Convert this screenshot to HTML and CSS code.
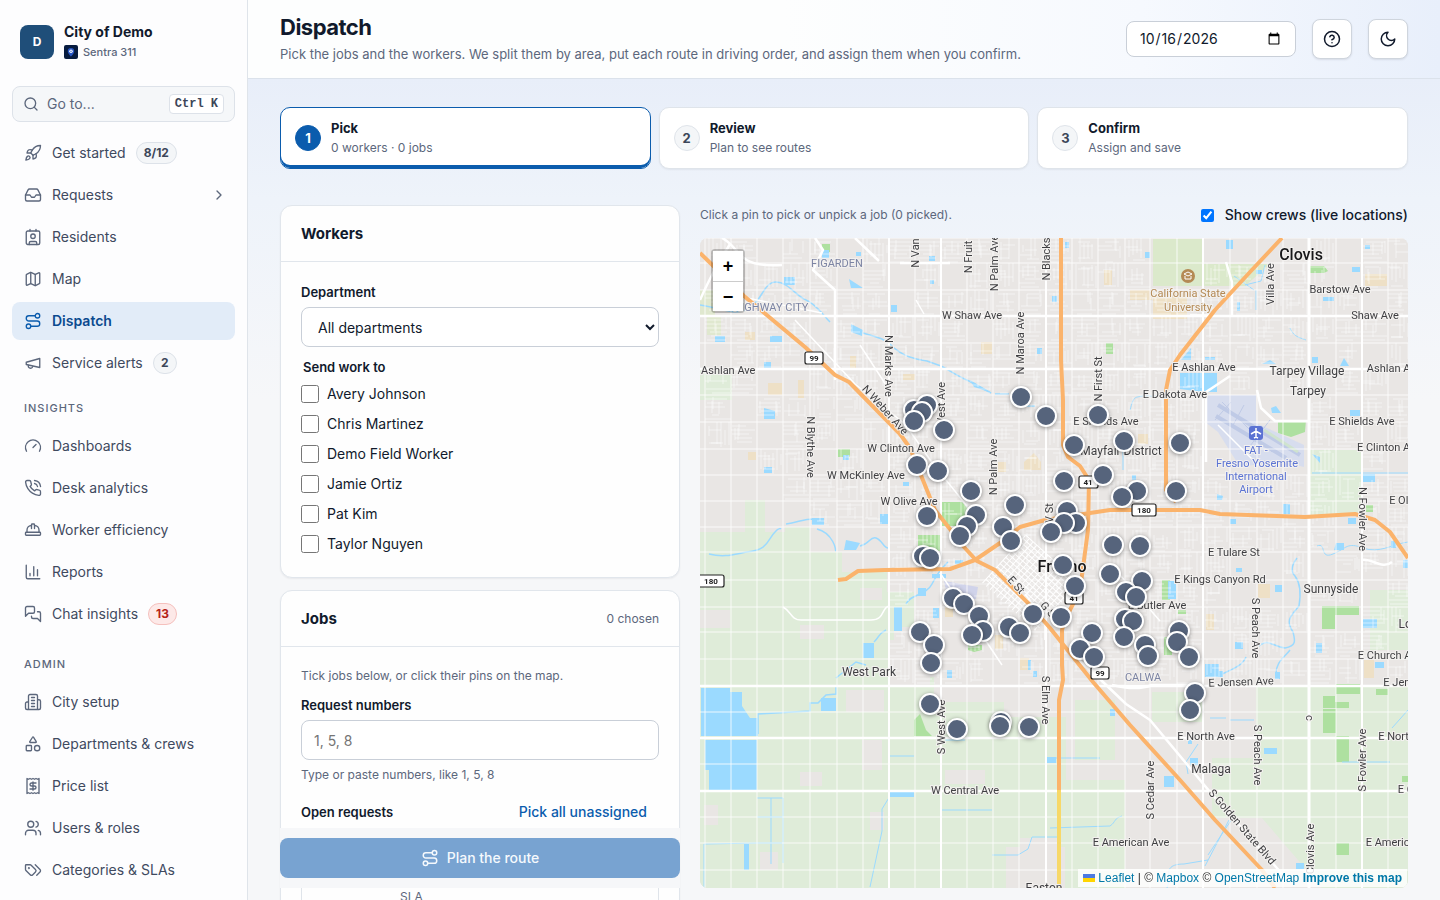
FILE: index.html
```html
<!DOCTYPE html>
<html lang="en">
<head>
<meta charset="utf-8">
<meta name="viewport" content="width=device-width, initial-scale=1">
<title>Dispatch</title>
<link rel="stylesheet" href="styles.css">
</head>
<body>
<div class="app">
  <aside class="sidebar">
    <div class="brand">
      <span class="brand-logo">D</span>
      <div>
        <div class="brand-name">City of Demo</div>
        <div class="brand-sub">
          <svg class="brand-mark" viewBox="0 0 14 14" aria-hidden="true"><rect width="14" height="14" rx="2" fill="#071b3f"/><path d="M7 3a3.2 3.2 0 0 0-3.200 3.200C3.800 8.600 7 11.500 7 11.500s3.200-2.900 3.200-5.300A3.200 3.200 0 0 0 7 3z" fill="#2756c5"/><circle cx="7" cy="6.300" r="1.700" fill="#fff"/><circle cx="7" cy="6.300" r=".7" fill="#2756c5"/></svg>
          Sentra 311
        </div>
      </div>
    </div>
    <button class="goto" type="button">
      <svg class="icon goto-icon" viewBox="0 0 24 24"><circle cx="11" cy="11" r="8"/><path d="m21 21-4.300-4.300"/></svg>
      <span>Go to...</span><kbd>Ctrl K</kbd>
    </button>
    <nav class="nav" aria-label="Main">
      <a class="nav-item" href="#"><svg class="icon" viewBox="0 0 24 24"><path d="M4.500 16.500c-1.500 1.260-2 5-2 5s3.740-.5 5-2c.71-.84.7-2.130-.09-2.910a2.180 2.180 0 0 0-2.910-.09z"/><path d="m12 15-3-3a22 22 0 0 1 2-3.950A12.880 12.880 0 0 1 22 2c0 2.720-.78 7.500-6 11a22.350 22.350 0 0 1-4 2z"/><path d="M9 12H4s.55-3.030 2-4c1.620-1.080 5 0 5 0"/><path d="M12 15v5s3.030-.55 4-2c1.080-1.620 0-5 0-5"/></svg>Get started<span class="badge">8/12</span></a>
      <a class="nav-item" href="#"><svg class="icon" viewBox="0 0 24 24"><path d="M22 12h-6l-2 3h-4l-2-3H2"/><path d="M5.450 5.110 2 12v6a2 2 0 0 0 2 2h16a2 2 0 0 0 2-2v-6l-3.450-6.890A2 2 0 0 0 16.760 4H7.240a2 2 0 0 0-1.790 1.110z"/></svg>Requests<svg class="icon chevron" viewBox="0 0 24 24"><path d="m9 18 6-6-6-6"/></svg></a>
      <a class="nav-item" href="#"><svg class="icon" viewBox="0 0 24 24"><path d="M16 2v2M8 2v2"/><path d="M7 22v-2a2 2 0 0 1 2-2h6a2 2 0 0 1 2 2v2"/><circle cx="12" cy="11" r="3"/><rect x="3" y="4" width="18" height="18" rx="2"/></svg>Residents</a>
      <a class="nav-item" href="#"><svg class="icon" viewBox="0 0 24 24"><path d="M14.100 5.550a2 2 0 0 0 1.800 0l3.650-1.830A1 1 0 0 1 21 4.620v12.760a1 1 0 0 1-.55.900l-4.550 2.270a2 2 0 0 1-1.800 0l-4.200-2.100a2 2 0 0 0-1.800 0l-3.650 1.830A1 1 0 0 1 3 19.380V6.620a1 1 0 0 1 .55-.9L8.100 3.450a2 2 0 0 1 1.800 0z"/><path d="M15 5.760v15M9 3.240v15"/></svg>Map</a>
      <a class="nav-item active" href="#" aria-current="page"><svg class="icon" viewBox="0 0 24 24"><circle cx="6" cy="19" r="3"/><path d="M9 19h8.500a3.500 3.500 0 0 0 0-7h-11a3.500 3.500 0 0 1 0-7H15"/><circle cx="18" cy="5" r="3"/></svg>Dispatch</a>
      <a class="nav-item" href="#"><svg class="icon" viewBox="0 0 24 24"><path d="m3 11 18-5v12L3 14v-3z"/><path d="M11.600 16.800a3 3 0 1 1-5.800-1.600"/></svg>Service alerts<span class="badge">2</span></a>
      <h2 class="nav-label">INSIGHTS</h2>
      <a class="nav-item" href="#"><svg class="icon" viewBox="0 0 24 24"><path d="m12 14 4-4"/><path d="M3.340 19a10 10 0 1 1 17.320 0"/></svg>Dashboards</a>
      <a class="nav-item" href="#"><svg class="icon" viewBox="0 0 24 24"><path d="M22 16.920v3a2 2 0 0 1-2.180 2 19.790 19.790 0 0 1-8.630-3.070 19.500 19.500 0 0 1-6-6 19.790 19.790 0 0 1-3.070-8.670A2 2 0 0 1 4.110 2h3a2 2 0 0 1 2 1.720c.127.96.361 1.903.7 2.810a2 2 0 0 1-.45 2.110L8.090 9.910a16 16 0 0 0 6 6l1.270-1.270a2 2 0 0 1 2.110-.45c.907.339 1.850.573 2.810.7A2 2 0 0 1 22 16.920z"/><path d="M14.050 2a9 9 0 0 1 8 7.940M14.050 6A5 5 0 0 1 18 10"/></svg>Desk analytics</a>
      <a class="nav-item" href="#"><svg class="icon" viewBox="0 0 24 24"><path d="M10 10V5a1 1 0 0 1 1-1h2a1 1 0 0 1 1 1v5"/><path d="M14 6a6 6 0 0 1 6 6v3M4 15v-3a6 6 0 0 1 6-6"/><rect x="2" y="15" width="20" height="4" rx="1"/></svg>Worker efficiency</a>
      <a class="nav-item" href="#"><svg class="icon" viewBox="0 0 24 24"><path d="M3 3v16a2 2 0 0 0 2 2h16M18 17V9M13 17V5M8 17v-3"/></svg>Reports</a>
      <a class="nav-item" href="#"><svg class="icon" viewBox="0 0 24 24"><path d="M14 9a2 2 0 0 1-2 2H6l-4 4V4a2 2 0 0 1 2-2h8a2 2 0 0 1 2 2z"/><path d="M18 9h2a2 2 0 0 1 2 2v11l-4-4h-6a2 2 0 0 1-2-2v-1"/></svg>Chat insights<span class="badge badge-alert">13</span></a>
      <h2 class="nav-label nav-label-admin">ADMIN</h2>
      <a class="nav-item" href="#"><svg class="icon" viewBox="0 0 24 24"><path d="M6 22V4a2 2 0 0 1 2-2h8a2 2 0 0 1 2 2v18ZM6 12H4a2 2 0 0 0-2 2v6a2 2 0 0 0 2 2h2M18 9h2a2 2 0 0 1 2 2v9a2 2 0 0 1-2 2h-2M10 6h4M10 10h4M10 14h4M10 18h4"/></svg>City setup</a>
      <a class="nav-item" href="#"><svg class="icon" viewBox="0 0 24 24"><path d="M8.300 10a.7.700 0 0 1-.626-1.079L11.400 3a.7.700 0 0 1 1.198-.043L16.300 8.900a.7.700 0 0 1-.572 1.100Z"/><rect x="3" y="14" width="7" height="7" rx="1"/><circle cx="17.500" cy="17.500" r="3.500"/></svg>Departments &amp; crews</a>
      <a class="nav-item" href="#"><svg class="icon" viewBox="0 0 24 24"><path d="M4 2v20l2-1 2 1 2-1 2 1 2-1 2 1 2-1 2 1V2l-2 1-2-1-2 1-2-1-2 1-2-1-2 1Z"/><path d="M16 8h-6a2 2 0 1 0 0 4h4a2 2 0 1 1 0 4H8M12 17.500v-11"/></svg>Price list</a>
      <a class="nav-item" href="#"><svg class="icon" viewBox="0 0 24 24"><path d="M16 21v-2a4 4 0 0 0-4-4H6a4 4 0 0 0-4 4v2"/><circle cx="9" cy="7" r="4"/><path d="M22 21v-2a4 4 0 0 0-3-3.870M16 3.130a4 4 0 0 1 0 7.750"/></svg>Users &amp; roles</a>
      <a class="nav-item" href="#"><svg class="icon" viewBox="0 0 24 24"><path d="m15 5 6.300 6.300a2.400 2.400 0 0 1 0 3.400L17 19"/><path d="M9.586 5.586A2 2 0 0 0 8.172 5H3a1 1 0 0 0-1 1v5.172a2 2 0 0 0 .586 1.414L8.290 18.290a2.426 2.426 0 0 0 3.420 0l3.580-3.580a2.426 2.426 0 0 0 0-3.420z"/><circle cx="6.500" cy="9.500" r=".5"/></svg>Categories &amp; SLAs</a>
    </nav>
  </aside>

  <div class="page">
    <header class="topbar">
      <div class="title">
        <h1>Dispatch</h1>
        <p>Pick the jobs and the workers. We split them by area, put each route in driving order, and assign them when you confirm.</p>
      </div>
      <div class="actions">
        <input class="date" type="date" value="2026-10-16" aria-label="Dispatch date">
        <button class="icon-btn" type="button" aria-label="Help"><svg class="icon" viewBox="0 0 24 24"><circle cx="12" cy="12" r="10"/><path d="M9.090 9a3 3 0 0 1 5.830 1c0 2-3 3-3 3M12 17h.01"/></svg></button>
        <button class="icon-btn" type="button" aria-label="Dark mode"><svg class="icon" viewBox="0 0 24 24"><path d="M12 3a6 6 0 0 0 9 9 9 9 0 1 1-9-9Z"/></svg></button>
      </div>
    </header>

    <main class="content">
      <ol class="steps">
        <li class="step current"><span class="step-num">1</span><div><strong>Pick</strong><span>0 workers · 0 jobs</span></div></li>
        <li class="step"><span class="step-num">2</span><div><strong>Review</strong><span>Plan to see routes</span></div></li>
        <li class="step"><span class="step-num">3</span><div><strong>Confirm</strong><span>Assign and save</span></div></li>
      </ol>

      <div class="columns">
        <form class="picker">
          <section class="card">
            <div class="card-head"><h2>Workers</h2></div>
            <div class="card-body">
              <label class="field-label" for="dept">Department</label>
              <select class="control" id="dept"><option>All departments</option></select>
              <fieldset class="workers">
                <legend>Send work to</legend>
                <label class="check"><input type="checkbox">Avery Johnson</label>
                <label class="check"><input type="checkbox">Chris Martinez</label>
                <label class="check"><input type="checkbox">Demo Field Worker</label>
                <label class="check"><input type="checkbox">Jamie Ortiz</label>
                <label class="check"><input type="checkbox">Pat Kim</label>
                <label class="check"><input type="checkbox">Taylor Nguyen</label>
              </fieldset>
            </div>
          </section>
          <section class="card">
            <div class="card-head"><h2>Jobs</h2><span class="muted">0 chosen</span></div>
            <div class="card-body jobs">
              <p class="hint">Tick jobs below, or click their pins on the map.</p>
              <label class="field-label" for="nums">Request numbers</label>
              <input class="control" id="nums" type="text" placeholder="1, 5, 8">
              <p class="hint hint-below">Type or paste numbers, like 1, 5, 8</p>
              <div class="open-row"><span class="field-label">Open requests</span><button class="link-btn" type="button">Pick all unassigned</button></div>
              <div class="job-box"><table class="job-table"><thead><tr><th></th><th scope="col">SLA</th></tr></thead></table></div>
            </div>
          </section>
          <div class="plan-bar">
            <button class="plan" type="submit" disabled><svg class="icon" viewBox="0 0 24 24"><circle cx="6" cy="19" r="3"/><path d="M9 19h8.500a3.500 3.500 0 0 0 0-7h-11a3.500 3.500 0 0 1 0-7H15"/><circle cx="18" cy="5" r="3"/></svg>Plan the route</button>
          </div>
        </form>

        <section class="map-col">
          <div class="map-head">
            <p>Click a pin to pick or unpick a job (0 picked).</p>
            <label class="crews"><input type="checkbox" checked>Show crews (live locations)</label>
          </div>
          <div class="map" id="map">
            <svg class="map-art" viewBox="700 238 708 650" preserveAspectRatio="xMidYMid slice" role="img" aria-label="Street map of Fresno">
              <rect x="700" y="238" width="708" height="650" fill="#e9e6e4"/>
              <g fill="#dfecd9">
                <path d="M700 532h85v-5h25v25h32v20h45v20h27v35h-20v50h40v25h70v15h62v130h-60v61H700z"/>
                <path d="M700 370h32v30h-32zM745 500h20v55h-20zM1310 450h52v65h-52zM1256 686h152v202h-86l-60-70h-50v-60h44zM1075 700h40v60h-40zM1065 780h60v108h-60zM1370 590h38v60h-38zM1152 692h50v30h-50z"/>
                <path fill="#dbe9cb" d="M1153 239h50v47h-50zM1200 264h70l-25 22h-45z"/>
              </g>
              <g fill="#e9e6e4">
                <path d="M704 805h14v20h-14zM800 772h22v14h-22zM862 740h20v30h-20zM700 610h30v18h-30zM846 690h38v22h-38zM890 640h40v45h-40zM1020 838h40v50h-40zM760 852h18v18h-18zM800 625h24v14h-24zM945 770h40v14h-40zM1210 830h36v30h-36zM870 812h14v18h-14zM860 588h22v12h-22z"/>
              </g>
              <g fill="#eee0c6">
                <path d="M768 383h14v12h-14zM798 380h6v18h-6zM850 356h6v12h-6zM981 342h11v12h-11zM1024 462l10-9 7 9v8h-17zM1365 274h22v12h-22zM1104 270h8v15h-8zM1130 290h22v10h-22zM1153 293h34v26h-34zM1206 614h8v16h-8zM1258 584h12v14h-12zM1364 660h10v18h-10zM945 607h8v10h-8zM995 635h8v14h-8zM1020 658h9v12h-9zM903 374h12v6h-12zM998 462h8v10h-8zM1138 434h10v10h-10zM745 332h10v8h-10zM748 452h8v8h-8z"/>
              </g>
              <g fill="#aee0a0">
                <path d="M940 502h22l10 12-14 12h-16zM918 535h22v16h-22zM838 449h12v8h-12zM1106 343h7v11h-7zM1310 266h14l4 5-4 2h-14zM1278 420h28l-1 12-14 5-13-4zM1322 606h37v9h-24v14h-13zM1336 684h24v10h-24zM1323 696h12v6h14v6h-26zM1323 709h13v24h-13zM1336 736h13v26h-13zM1336 843h13v12h-13zM1376 689h12v6h-12zM914 720l6-6 6 16 6 6h-18zM1162 580h8v20h-8zM1164 637h8v18h-8zM968 645h14v5l-8 2-6-2zM822 244h8v8h-8zM1366 505h7v7h-7zM1402 776h6v6h-6zM1178 610h8v4h-8z"/>
              </g>
              <path fill="#e0e8cf" d="M700 290h15v25h-15zM707 315h14v20h-14z"/>
              <path fill="#d3dbf0" opacity=".85" d="M1205 395h51v28l48 22v22l-24-6-40 6-22-35-13-10z"/>
              <path fill="#d0d3ea" d="M944 581l34 6-2 12-28 2z"/>
              <g stroke="#bfcae6" stroke-width="4" fill="none"><path d="M1218 405l82 50M1216 416l70 42"/><path stroke-width="1" d="M1222 402l50 50M1244 405l-12 22M1270 420l-20 26M1215 420l16-18"/></g>
              <path stroke="#cfe3cf" stroke-width="3" d="M1264 430l34 22"/>

              <g fill="#9bdaff">
                <path d="M701 688h29v4h12v14l8 12h8v18H701zM705 740h52v50h-48v-20h-4zM821 698h15v13h-15zM863 643h11v15h-11zM894 607h8v24h-8zM784 277h11v8h-11zM715 336h10v6h-10zM770 336h12v6h-12zM764 362h7v6h-7zM764 408l11 3v8h-11zM764 467h8v6h-8zM822 250h7v8h-7zM849 279l14 9h-12zM856 252h5v4h-5zM851 324l12 6-1 6-11-4zM891 305h6v7h-6zM929 256h6v5h-6zM930 280h4v4h-4zM1052 296h5v6h-5zM1037 348h5v6h-5zM903 482h6v4h-6zM880 514h8v10h-8zM812 518h12v7h-12zM846 540l14 3-4 7h-12zM843 455h6v5h-6zM970 380l22 13-18-6zM918 588h8v8h-8zM932 574h14v4h-14zM955 560h8v4h-8zM933 608h6v10h-6zM1028 660h3v10h-3zM1033 671h4v6h-4zM1047 757h9v6h-9zM890 792h24v5h-24zM744 844h5v26h-5zM947 670h5v8h-5zM1181 360l10-12v12zM1180 373h37v19h-14l-23-3zM1205 357h10v3h-10zM1226 240h7v9h-7zM1145 252h5v6h-5zM1237 302h3v9h-3zM1256 270h6v4h-6zM1352 267h8v5h-8zM1365 245h5v4h-5zM1323 297h11v4h-11zM1262 364l8-4 6 4zM1312 357h6v6h-6zM1340 366l4-8 5 8zM1350 410h10v6h-10zM1271 408l5-2 5 7h-9zM1312 454l8 3v6zM1363 474h12v8h-12zM1283 504h7v10h-7zM1217 494l6 2-1 4h-5zM1230 519h6v5h-6zM1348 518h8v6h-8zM1336 543h8v7h-10zM1391 541h5v7h-5zM1168 581h8v18h-8zM1205 664h14v7h4v6h-18zM1235 642h8v7h-8zM1275 585h7v7h-7zM1363 619h14v9h-14zM1316 643h6v10h-6zM1375 662h9v6h-9zM1275 672h5v7h-5zM1264 748h13v6h-13zM1190 758h8v7h-8zM1164 776h10v11h-10zM1110 709h5v7h-5zM1236 568h6v4h-6zM1403 560h5v8h-5zM1296 863h8v6h-8zM1132 475h4v5h-4zM1188 740h4v4h-4zM1065 242h4v6h-4z"/>
                <g fill="none" stroke="#9bdaff" stroke-width="1.500">
                  <path d="M700 305c18 2 34 12 50 3 12-8 14-26 26-26s20 14 30 18 16 14 24 22M863 333c14 4 22 6 28 12 12 12 24 14 36 16l14 5c12 6 16 10 28 15l22 12M995 394h14M1025 406h10"/>
                  <path d="M709 554c16 4 26 0 38-2 22-2 20-12 28-20 4-5 6-3 6-3M786 524c14-2 18-6 32-5M817 529c16 4 20 22 18 22M860 546c10-2 10-10 16-8s8 10 12 10"/>
                  <path d="M836 686v8l-10 1-8 8h-8v8l-52 3v20M874 642c6-6 4-8 12-12M836 678l20-16 10 3M906 604c4-10 20-8 26-20s10-16 16-22"/>
                  <path stroke-width="1" d="M771 798v66M757 798h26v65M757 817h26M704 888v-44l54-1h24M890 796l-8 13v22l-12 56M890 756h24M942 810h50M992 855h26l10-6 4-12h26M945 740h20"/>
                  <path d="M1297 558c-6 8-6 14-2 18 6 8 6 18 4 30-8 10-14 14-6 26 2 8 4 14-8 16-14-2-16-10-26-2M1290 650c-6 8-14 12-14 24M1246 657c-4 10-18 14-26 18"/>
                  <path stroke-width="1" d="M1050 758h50M1050 828l60-2c6-4 4-8 12-10M1167 888l3-10c-4-10 2-14 14-14l24-4M1208 855l24-36M1205 866l24-46M1198 744l-12 18 2 12M1312 473h96M1317 546c10-4 2 14 16 8s14-12 30-6 30-4 45-6M1392 728l16-18M1290 328c4 10 12 10 16 12M1130 410c4-14 4-12 12-14h14M1256 290v20M1234 276l20 14M1245 285l16-4 4-16M1123 444v26M1230 720h24M1210 718h16M1342 762h48"/>
                </g>
              </g>

              <g id="streets" stroke="#fff" fill="none"></g>
              <g stroke="#fff" fill="none" stroke-linejoin="round">
                <path stroke-width="1.500" d="M795 320l60 64 50 40 28 40 34 42M940 573l22 32 40 60M1120 575l40 46M783 607c8 4 8 13 18 13h70c14 0 10-12 18-14"/>
                <path stroke-width="2.500" d="M700 300c8-18 12-26 30-56M722 238c20 10 12 30 60 27M815 238l8 12-10 20 22 20v90M855 238l24 23M900 263h50M1226 262l6 20v35M1230 376l-24 16v70M1257 390l4 18 14 13h35M1062 645l40 36 24 23 24 16 60 72 60 68 12 14M1362 560c10-2 20 10 30 2M1112 685c16 4 30 4 40 0h50"/>
                <path stroke-width="1.500" d="M1218 425l40 40M1190 315l22 0M860 345l26 40M916 300l8 14M1045 640v-20l-20-26M742 297l80 16"/>
              </g>
              <g id="downtown" stroke="#fff" stroke-width="1"></g>

              <g fill="none" stroke="#fbb36b" stroke-width="4" stroke-linejoin="round">
                <path d="M700 253l44 43 61 51 30 28 14 7 51 52 10 14 25 62 29 37 11 12"/>
                <path d="M838 580l8-1 12-8 27-1 65-1 25-9 20 10 15 15 20 20 20 23 43 54 37 43 50 55 35 40 47 50 13 18"/>
                <path d="M975 560l25-17 20-16 25-7 45-7 20-3h90l20 4 85 3 50-3 20 6 15 12 18 26"/>
                <path d="M1061 238v122l2 40v45l5 12 12 9 9 14-1 50-4 30-4 30-15 30-3 10v35l1 15-4 20v90"/>
                <path d="M1282 238l-32 34-35 38-35 45-10 15-4 20v100l10 12"/>
                <path stroke="#f7d868" d="M1059 790v98"/>
              </g>

              <g class="shields">
                <g><rect x="805" y="352" width="18" height="12" rx="2"/><text x="814" y="361">99</text></g>
                <g><rect x="1079" y="476" width="19" height="12" rx="2"/><text x="1088" y="485">41</text></g>
                <g><rect x="1132" y="504" width="24" height="12" rx="2"/><text x="1144" y="513">180</text></g>
                <g><rect x="696" y="575" width="28" height="12" rx="2"/><text x="711" y="584">180</text></g>
                <g><rect x="1065" y="592" width="18" height="12" rx="2"/><text x="1074" y="601">41</text></g>
                <g><rect x="1091" y="667" width="18" height="12" rx="2"/><text x="1100" y="676">99</text></g>
              </g>
              <g id="labels" class="labels"></g>
              <circle cx="1188" cy="276" r="7" fill="#b48a55"/><path d="M1184 274l4-2 4 2-4 2zM1185 276v3h6v-3" fill="none" stroke="#fff"/>
              <rect x="1249" y="426" width="14" height="14" rx="3" fill="#5b73d3"/><path d="M1256 428v10M1251 434l5-3 5 3M1254 438l2-1 2 1" stroke="#fff" stroke-width="1.500" fill="none"/>
            </svg>
            <div class="zoom"><button type="button" aria-label="Zoom in">+</button><button type="button" aria-label="Zoom out">−</button></div>
            <div class="credit"><svg viewBox="0 0 12 8" aria-hidden="true"><path fill="#4c7be1" d="M0 0h12v4H0z"/><path fill="#ffd500" d="M0 4h12v4H0z"/></svg> <a href="#">Leaflet</a> | © <a href="#">Mapbox</a> © <a href="#">OpenStreetMap</a> <a href="#"><b>Improve this map</b></a></div>
          </div>
        </section>
      </div>
    </main>
  </div>
</div>
<script src="map.js"></script>
</body>
</html>
```
FILE: styles.css
```css
* { box-sizing: border-box; }
body { margin: 0; font-family: Inter, "Liberation Sans", sans-serif; font-size: 14px; line-height: 20px; color: #111a2c; }
h1, h2, p, ol, fieldset { margin: 0; padding: 0; border: 0; }
button, input, select { font: inherit; color: inherit; }
.app { display: flex; height: 100vh; overflow: hidden; background: #f6f7f9; }
.icon { width: 18px; height: 18px; flex: none; fill: none; stroke: currentColor; stroke-width: 2; stroke-linecap: round; stroke-linejoin: round; }

.sidebar { flex: 0 0 248px; padding: 20px 12px 12px; background: #fdfdfe; border-right: 1px solid #dfe4ea; overflow-y: auto; scrollbar-width: none; }
.brand { display: flex; align-items: center; gap: 10px; padding: 0 8px; height: 44px; }
.brand-logo { width: 34px; height: 34px; border-radius: 8px; background: #1f4e79; color: #fff; display: grid; place-items: center; font-size: 12px; font-weight: 700; }
.brand-name { font-weight: 700; }
.brand-sub { display: flex; align-items: center; gap: 5px; font-size: 11px; font-weight: 500; color: #5c677c; }
.brand-mark { width: 14px; height: 14px; }
.goto { display: flex; align-items: center; gap: 8px; width: 100%; height: 36px; margin: 22px 0 12px; padding: 0 10px; border: 1px solid #dde2e9; border-radius: 8px; background: #f5f7f9; color: #5c677c; text-align: left; }
.goto-icon { width: 16px; height: 16px; }
.goto kbd { margin-left: auto; padding: 0 5px; border: 1px solid #dde2e9; border-radius: 4px; background: #fff; color: #3c4659; font: 700 12px/18px "Liberation Mono", monospace; }
.nav { display: flex; flex-direction: column; gap: 4px; }
.nav-item { display: flex; align-items: center; gap: 10px; min-height: 38px; padding: 0 12px 1px; border-radius: 8px; color: #3f4a5f; text-decoration: none; }
.nav-item .icon { color: #5c677c; stroke-width: 1.8; }
.nav-item.active { background: #e2ecf8; color: #0b4a8f; font-weight: 600; }
.nav-item.active .icon { color: #0b5cad; }
.nav-item .chevron { width: 16px; height: 16px; margin-left: auto; margin-right: -4px; stroke-width: 2; }
.badge { min-width: 24px; padding: 0 7px; border: 1px solid #dde2e9; border-radius: 11px; background: #f4f6f8; color: #3c4659; font-size: 12px; font-weight: 700; text-align: center; }
.badge-alert { background: #fde9e8; border-color: #f5c0bd; color: #b42318; }
.nav-label { padding: 15px 12px 7px; font-size: 11px; line-height: 15px; font-weight: 500; letter-spacing: 1px; color: #5c677c; }
.nav-label-admin { margin-top: 5px; }

.page { flex: 1; min-width: 0; display: flex; flex-direction: column; background: linear-gradient(#e8eef9 78px, #eef3fa 200px, #f6f7f9 400px); }
.topbar { display: flex; align-items: center; justify-content: space-between; gap: 24px; min-height: 79px; padding: 13px 32px 14px; border-bottom: 1px solid #dbe2eb; background: linear-gradient(90deg, #fdfefe 45%, #f6f9fe 75%, #e8effb); }
.title h1 { font-size: 22px; line-height: 28px; font-weight: 700; letter-spacing: -0.5px; }
.title p { margin-top: 3px; font-size: 13px; line-height: 20px; color: #5c677c; }
.actions { display: flex; align-items: center; gap: 16px; }
.date { width: 170px; height: 36px; padding: 0 12px; border: 1px solid #c9cfd8; border-radius: 8px; background: #fff; }
.icon-btn { display: grid; place-items: center; width: 40px; height: 40px; padding: 0; border: 1px solid #cfd5dd; border-radius: 8px; background: #fff; box-shadow: 0 1px 2px rgb(16 24 40 / 10%); }

.content { flex: 1; min-height: 0; padding: 28px 32px 0; overflow-y: auto; scrollbar-width: none; }
.steps { display: grid; grid-template-columns: repeat(3, 1fr); gap: 8px; list-style: none; }
.step { display: flex; align-items: center; gap: 10px; min-height: 62px; padding: 0 14px; border: 1px solid #dfe4ea; border-radius: 10px; background: #fff; box-shadow: 0 1px 2px rgb(16 24 40 / 6%); }
.step strong, .step div span { display: block; line-height: 19px; }
.step strong { font-size: 13px; font-weight: 700; }
.step div span { font-size: 12px; color: #5c677c; }
.step-num { display: grid; place-items: center; width: 26px; height: 26px; border: 1px solid #dfe4ea; border-radius: 50%; background: #f4f6f8; color: #3c4659; font-size: 13px; font-weight: 700; }
.current { border-color: #0b5cad; box-shadow: inset 0 -3px #0b5cad; }
.current .step-num { background: #0b5cad; border-color: #0b5cad; color: #fff; }

.columns { display: grid; grid-template-columns: 400px minmax(0, 1fr); gap: 20px; align-items: start; margin-top: 36px; }
.picker { display: flex; flex-direction: column; gap: 12px; }
.card { border: 1px solid #e1e6ec; border-radius: 12px; background: #fefefe; box-shadow: 0 1px 2px rgb(16 24 40 / 6%); }
.card-head { display: flex; align-items: center; justify-content: space-between; height: 56px; padding: 0 20px; border-bottom: 1px solid #e1e6ec; }
.card-head h2 { font-size: 15px; font-weight: 700; }
.muted { font-size: 12px; color: #5c677c; }
.card-body { padding: 20px 20px 18px; }
.field-label { display: block; font-size: 13px; font-weight: 600; }
.control { display: block; width: 100%; height: 40px; margin-top: 5px; padding: 0 12px; border: 1px solid #c9cfd8; border-radius: 8px; background: #fff; }
.control::placeholder { color: #757575; }
.workers { min-width: 0; margin-top: 10px; }
.workers legend { padding: 0 2px 2px; font-size: 13px; font-weight: 600; }
.check { display: flex; align-items: center; gap: 8px; height: 30px; }
.check input { width: 18px; height: 18px; margin: 0; }
.jobs { padding-bottom: 120px; }
.hint { font-size: 12px; line-height: 18px; color: #5c677c; }
.jobs .hint + .field-label { margin-top: 10px; }
.hint-below { margin-top: 6px; }
.open-row { display: flex; align-items: center; justify-content: space-between; margin-top: 8px; min-height: 40px; }
.link-btn { padding: 8px 12px; border: 0; background: none; color: #0b5cad; font-weight: 500; }
.job-box { margin-top: 4px; border: 1px solid #dfe4ea; border-radius: 8px; }
.job-table { width: 100%; border-collapse: collapse; }
.job-table th { width: 98px; height: 80px; padding: 40px 0 0; text-align: left; font-size: 12px; font-weight: 400; color: #5c677c; }
.job-table th + th { width: auto; }
.plan-bar { position: sticky; bottom: 12px; padding: 10px 0; background: #f6f7f9; }
.plan { display: flex; align-items: center; justify-content: center; gap: 8px; width: 100%; height: 40px; border: 0; border-radius: 8px; background: #78a3d1; color: #f5f9fd; font-weight: 500; }

.map-head { display: flex; align-items: center; justify-content: space-between; height: 20px; margin-bottom: 13px; }
.map-head p { font-size: 12px; color: #5c677c; }
.crews { display: flex; align-items: center; gap: 11px; font-weight: 500; }
.crews input { width: 13px; height: 13px; margin: 0; accent-color: #0075ff; }
.map { position: relative; height: calc(100vh - 250px); border-radius: 8px; overflow: hidden; background: #e9e6e4; }
.map-art { display: block; width: 100%; height: 100%; }
.labels text { font-family: Roboto, sans-serif; font-size: 11px; fill: #3f3f42; stroke: #f3f1ef; stroke-width: 2px; paint-order: stroke; text-anchor: middle; dominant-baseline: central; }
.labels .town { font-size: 12px; }
.labels .city { font-size: 16px; font-weight: 500; fill: #18181a; }
.labels .hood { fill: #7c84a3; }
.labels .school { fill: #b48a55; }
.labels .airport { fill: #5b73d3; }
.shields rect { fill: #fff; stroke: #222; stroke-width: 1.2px; }
.shields text { font: 700 8px Roboto, sans-serif; fill: #222; text-anchor: middle; }
.pin { position: absolute; width: 22px; height: 22px; margin: -11px 0 0 -11px; padding: 0; border: 2px solid #fff; border-radius: 50%; background: #56647c; box-shadow: 0 1px 4px rgb(0 0 0 / 40%); }
.zoom { position: absolute; top: 11px; left: 11px; display: flex; flex-direction: column; border: 2px solid rgb(0 0 0 / 22%); border-radius: 4px; background-clip: padding-box; }
.zoom button { width: 30px; height: 30px; padding: 0; border: 0; background: #fff; color: #000; font: 700 18px/28px "Liberation Sans", sans-serif; }
.zoom button + button { border-top: 1px solid #ccc; }
.credit { position: absolute; right: 1px; bottom: 1px; padding: 0 5px; background: rgb(255 255 255 / 82%); color: #333; font: 12px/18px "Liberation Sans", sans-serif; }
.credit svg { width: 12px; height: 8px; }
.credit a { color: #0078a8; text-decoration: none; }
```
FILE: map.js
```js
const NS = 'http://www.w3.org/2000/svg';
const el = (parent, name, attrs, text) => {
  const node = document.createElementNS(NS, name);
  for (const key in attrs) node.setAttribute(key, attrs[key]);
  if (text) node.textContent = text;
  parent.append(node);
  return node;
};

// Arterial grid
const xs = [705, 731, 757, 783, 810, 837, 863, 889, 915, 941, 967, 993, 1019, 1046, 1072, 1098, 1125, 1150, 1177, 1203, 1230, 1257, 1283, 1309, 1336, 1362, 1388, 1414];
const ys = [238, 263, 290, 316, 343, 369, 395, 422, 449, 475, 501, 527, 552, 580, 607, 632, 659, 686, 712, 738, 764, 791, 817, 843, 870, 896];
const majorX = [889, 941, 1046, 1203, 1309, 1362];
const majorY = [316, 369, 686, 738, 791];
const streets = document.getElementById('streets');
xs.forEach(x => el(streets, 'path', { d: `M${x} 238V888`, 'stroke-width': x === 1309 ? 3 : majorX.includes(x) ? 2 : 1, opacity: majorX.includes(x) ? 1 : 0.8 }));
ys.forEach(y => el(streets, 'path', { d: `M700 ${y}H1408`, 'stroke-width': majorY.includes(y) ? 2.4 : 1, opacity: majorY.includes(y) ? 1 : 0.8 }));

// Local streets inside built-up blocks
let seed = 7;
const rnd = () => (seed = (seed * 16807) % 2147483647) / 2147483647;
const builtUp = (x, y) => {
  if (x >= 1203 && x < 1300 && y >= 394 && y < 470) return false;
  if (x >= 1150 && x < 1203 && y < 285) return false;
  if (x < 800) return y < 500 && rnd() < (y < 410 ? 0.75 : 0.35);
  if (x < 889) return y < 520 && rnd() < 0.8;
  if (x < 1000) return y < 680 && rnd() < 0.9;
  if (x < 1200) return y < 680;
  if (x < 1300) return y < 680 && rnd() < 0.8;
  return y < 680 && rnd() < 0.7;
};
let local = '';
for (let i = 0; i < xs.length - 1; i++) for (let j = 0; j < ys.length - 1; j++) {
  const x = xs[i], y = ys[j], w = xs[i + 1] - x, h = ys[j + 1] - y;
  if (!builtUp(x, y)) continue;
  const across = rnd() < 0.5;
  for (let k = 4; k < 25; k += 4) {
    if (rnd() < 0.2) continue;
    const a = rnd() < 0.5 ? 0 : Math.round(rnd() * 8), b = Math.round(14 + rnd() * 12);
    local += across ? `M${x + a} ${y + k}H${Math.min(x + b, x + w)}` : `M${x + k} ${y + a}V${Math.min(y + b, y + h)}`;
  }
  for (let k = 0; k < 3; k++) {
    const p = Math.round(3 + rnd() * 20), q = Math.round(rnd() * 10);
    local += across ? `M${x + p} ${y + q}v12` : `M${x + q} ${y + p}h12`;
  }
}
el(streets, 'path', { d: local, 'stroke-width': 0.8, opacity: 0.65 });

// Downtown blocks run at an angle to the main grid
let diag = '';
for (let k = -36; k <= 36; k += 5) diag += `M${k} -30V34M-36 ${k * 0.85}H36`;
el(document.getElementById('downtown'), 'path', { d: diag, transform: 'translate(1032 582) rotate(42)' });

// [text, x, y, rotation, class]
[
  ['FIGARDEN', 837, 263, 0, 'hood'], ['HIGHWAY CITY', 771, 307, 0, 'hood'], ['CALWA', 1143, 677, 0, 'hood'],
  ['N Van', 915, 253, -90], ['N Fruit', 968, 257, -90], ['N Palm Ave', 994, 263, -90], ['N Blacks', 1046, 259, -90],
  ['W Shaw Ave', 972, 315], ['N Maroa Ave', 1020, 343, -90], ['N Marks Ave', 888, 366, 90], ['W Ashlan Ave', 722, 370],
  ['N Weber Ave', 885, 410, 48], ['N West Ave', 941, 410, -90], ['N Blythe Ave', 810, 447, 90], ['W Clinton Ave', 901, 448],
  ['W McKinley Ave', 866, 475], ['W Olive Ave', 909, 501], ['N Palm Ave', 993, 467, -90], ['N First St', 1098, 379, -90],
  ['E Ashlan Ave', 1204, 367], ['E Dakota Ave', 1175, 394], ['E Shields Ave', 1106, 421], ['Mayfair District', 1121, 451, 0, 'town'],
  ['Clovis', 1301, 254, 0, 'city'], ['Villa Ave', 1270, 284, -90], ['Barstow Ave', 1340, 289], ['Shaw Ave', 1375, 315],
  ['California State', 1188, 293, 0, 'school'], ['University', 1188, 307, 0, 'school'],
  ['Tarpey Village', 1307, 371, 0, 'town'], ['Tarpey', 1308, 391, 0, 'town'], ['Ashlan Ave', 1394, 368], ['E Shields Ave', 1362, 421],
  ['E Clinton Ave', 1389, 447], ['FAT -', 1256, 450, 0, 'airport'], ['Fresno Yosemite', 1257, 463, 0, 'airport'],
  ['International', 1256, 476, 0, 'airport'], ['Airport', 1256, 489, 0, 'airport'], ['E Olive Ave', 1416, 500],
  ['N Fowler Ave', 1362, 519, 90], ['E Tulare St', 1234, 552], ['E Kings Canyon Rd', 1220, 579], ['Sunnyside', 1331, 589, 0, 'town'],
  ['V St', 1049, 513, -90], ['Fresno', 1062, 566, 0, 'city'], ['E St', 1016, 585, 48], ['G St', 1049, 611, 48],
  ['E Butler Ave', 1157, 605], ['S Peach Ave', 1255, 628, 90], ['Lone Star', 1424, 624, 0, 'town'], ['E Church Ave', 1390, 655],
  ['West Park', 869, 672, 0, 'town'], ['E Jensen Ave', 1241, 682, -2], ['E Jensen Ave', 1416, 682], ['S Elm Ave', 1045, 700, 90],
  ['S West Ave', 941, 727, -90], ['c', 1309, 718, 90], ['E North Ave', 1206, 736], ['S Peach Ave', 1257, 755, 90],
  ['E North Ave', 1407, 736], ['S Fowler Ave', 1362, 760, -90], ['Malaga', 1211, 769, 0, 'town'], ['W Central Ave', 965, 790],
  ['S Cedar Ave', 1150, 790, -90], ['E Central Ave', 1430, 789], ['S Golden State Blvd', 1242, 827, 49], ['E American Ave', 1131, 842],
  ['E American Ave', 1404, 842], ['Clovis Ave', 1310, 849, -90], ['Easton', 1044, 888, 0, 'town']
].forEach(([text, x, y, rot = 0, cls = '']) =>
  el(document.getElementById('labels'), 'text', { x, y, class: cls, transform: `rotate(${rot} ${x} ${y})` }, text));

const pins = [[1021,397],[1046,416],[1098,415],[914,410],[927,405],[922,412],[914,421],[944,430],[1074,445],[1124,441],[1180,443],[917,465],[938,471],[1103,475],[1064,481],[971,491],[1137,491],[1122,497],[1176,491],[1015,505],[927,516],[976,515],[967,526],[960,536],[1003,527],[1011,541],[1067,511],[1076,523],[1064,523],[1051,532],[1113,545],[1140,546],[923,556],[930,558],[1063,565],[1110,574],[1075,586],[1142,581],[1126,592],[1136,597],[953,598],[964,604],[979,616],[1033,614],[1061,617],[983,631],[972,635],[1009,627],[1020,633],[920,632],[934,645],[931,663],[1125,619],[1133,621],[1124,637],[1092,633],[1080,649],[1094,657],[1145,645],[1148,656],[1179,631],[1177,642],[1189,657],[1195,693],[1190,710],[930,704],[957,729],[1001,722],[1000,726],[1029,727]];
pins.forEach(([x, y], i) => {
  const pin = document.createElement('button');
  pin.type = 'button';
  pin.className = 'pin';
  pin.setAttribute('aria-label', `Job ${i + 1}`);
  pin.style.left = `${(x - 700) / 7.08}%`;
  pin.style.top = `${(y - 238) / 6.5}%`;
  document.getElementById('map').append(pin);
});
```
